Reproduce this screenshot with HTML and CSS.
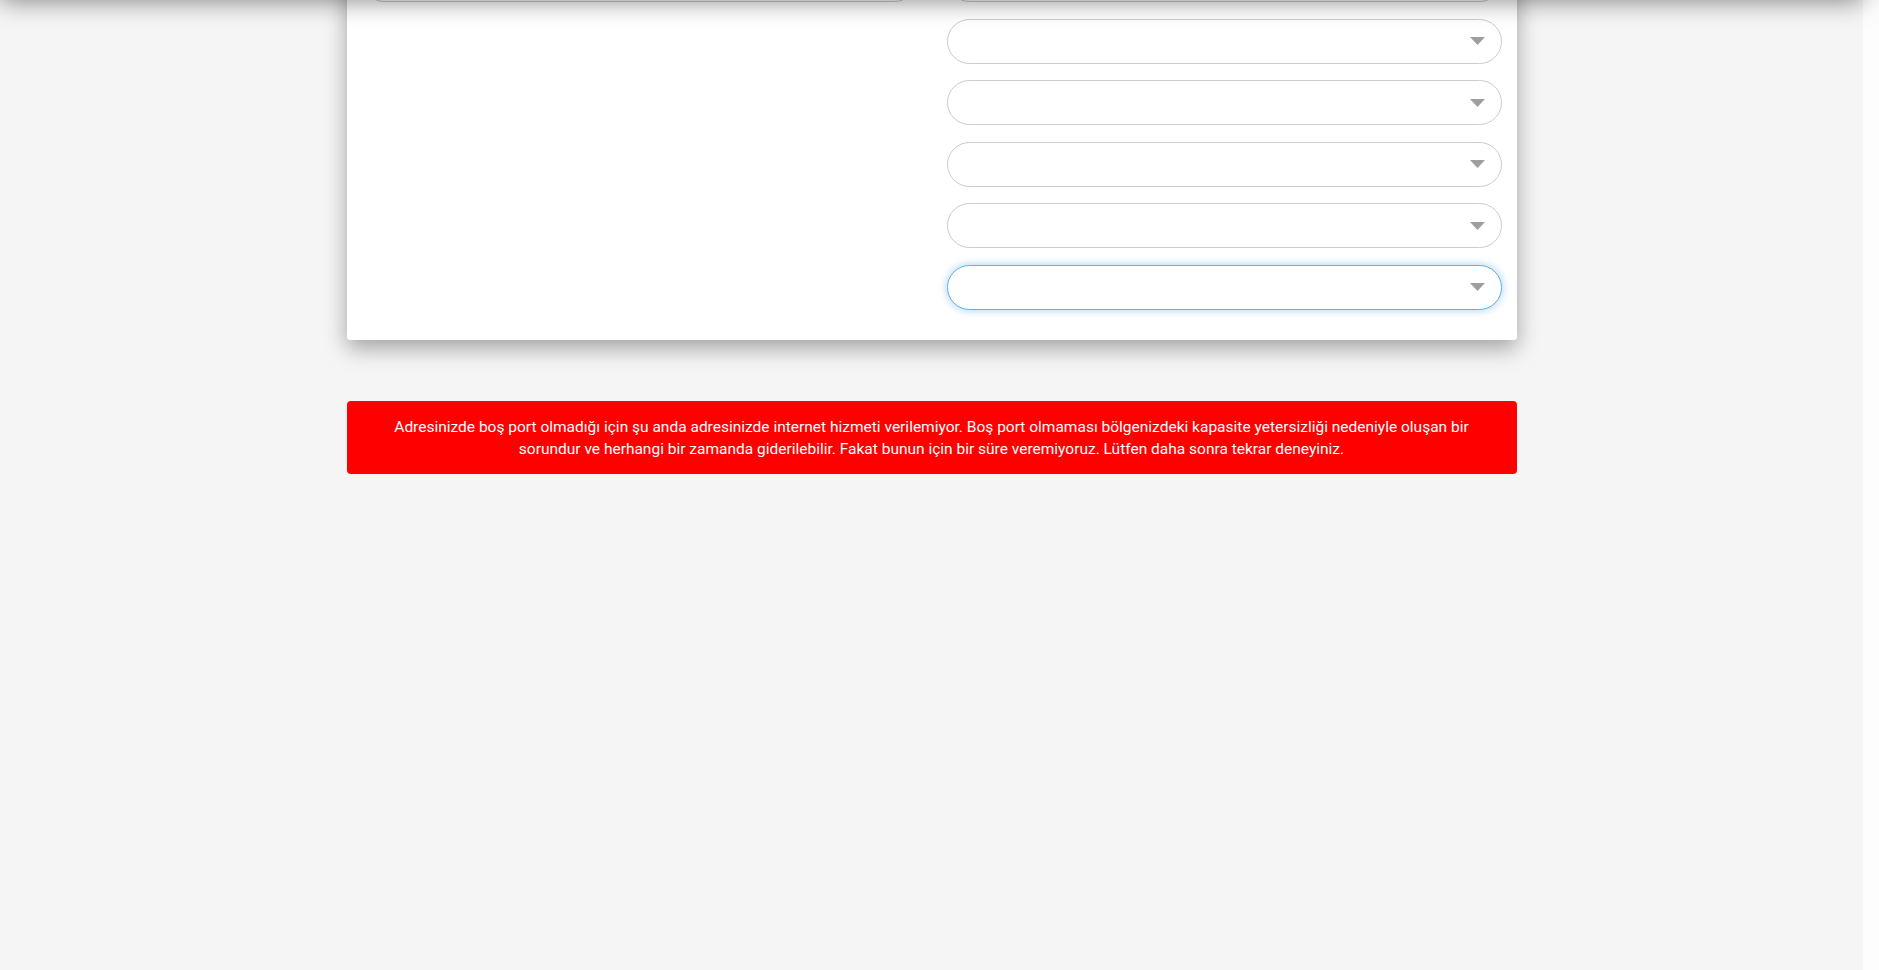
FILE: index.html
```html
<!DOCTYPE html>
<html lang="tr">
<head>
<meta charset="utf-8">
<title>Adres Sorgulama</title>
<link rel="stylesheet" href="styles.css">
</head>
<body>
<div class="top-shade"></div>
<div class="viewport">
  <main class="main">
    <div class="container">
      <section class="card">
        <div class="col">
          <div class="select"><svg class="caret" width="15" height="8" viewBox="0 0 15 8"><path d="M0 0H15L7.5 8Z"/></svg></div>
        </div>
        <div class="col">
          <div class="select"><svg class="caret" width="15" height="8" viewBox="0 0 15 8"><path d="M0 0H15L7.5 8Z"/></svg></div>
          <div class="select"><svg class="caret" width="15" height="8" viewBox="0 0 15 8"><path d="M0 0H15L7.5 8Z"/></svg></div>
          <div class="select"><svg class="caret" width="15" height="8" viewBox="0 0 15 8"><path d="M0 0H15L7.5 8Z"/></svg></div>
          <div class="select"><svg class="caret" width="15" height="8" viewBox="0 0 15 8"><path d="M0 0H15L7.5 8Z"/></svg></div>
          <div class="select"><svg class="caret" width="15" height="8" viewBox="0 0 15 8"><path d="M0 0H15L7.5 8Z"/></svg></div>
          <div class="select focused"><svg class="caret" width="15" height="8" viewBox="0 0 15 8"><path d="M0 0H15L7.5 8Z"/></svg></div>
        </div>
      </section>
      <div class="alert">Adresinizde boş port olmadığı için şu anda adresinizde internet hizmeti verilemiyor. Boş port olmaması bölgenizdeki kapasite yetersizliği nedeniyle oluşan bir<br>sorundur ve herhangi bir zamanda giderilebilir. Fakat bunun için bir süre veremiyoruz. Lütfen daha sonra tekrar deneyiniz.</div>
    </div>
  </main>
  <div class="scrollbar"></div>
</div>
</body>
</html>
```

FILE: styles.css
```css
html, body {
  margin: 0;
  padding: 0;
  height: 970px;
  overflow: hidden;
}
body {
  background: #f5f5f5;
  font-family: Roboto, "Liberation Sans", Arial, sans-serif;
}
.top-shade {
  position: fixed;
  top: -50px;
  left: 0;
  right: 16px;
  height: 50px;
  box-shadow: 0 0 26px rgba(0, 0, 0, 0.5);
  z-index: 10;
  background: #f5f5f5;
}
.viewport {
  display: flex;
  height: 970px;
}
.main {
  flex: 1;
  min-width: 0;
}
.scrollbar {
  width: 16px;
  background: #fdfdfd;
}
.container {
  width: 1170px;
  margin: -58px auto 0;
}
.card {
  background: #fff;
  border-radius: 3px;
  box-shadow: 0 8px 22px rgba(0, 0, 0, 0.35);
  padding: 15px 15px 30px;
  display: grid;
  grid-template-columns: 555px 555px;
  column-gap: 30px;
  align-items: start;
}
.col {
  display: flex;
  flex-direction: column;
  gap: 16.5px;
}
.select {
  box-sizing: border-box;
  height: 45px;
  border: 1px solid #cccccc;
  border-radius: 23px;
  background: #fff;
  display: flex;
  align-items: center;
  justify-content: flex-end;
  padding-right: 16px;
}
.select.focused {
  border-color: #66afe9;
  box-shadow: 0 0 8px rgba(102, 175, 233, 0.6);
}
.caret path {
  fill: #9e9e9e;
}
.alert {
  margin-top: 61px;
  background: #ff0000;
  color: #fff;
  border-radius: 4px;
  padding: 15.5px 15px 13.5px;
  text-align: center;
  font-size: 15.5px;
  line-height: 22px;
}
```
